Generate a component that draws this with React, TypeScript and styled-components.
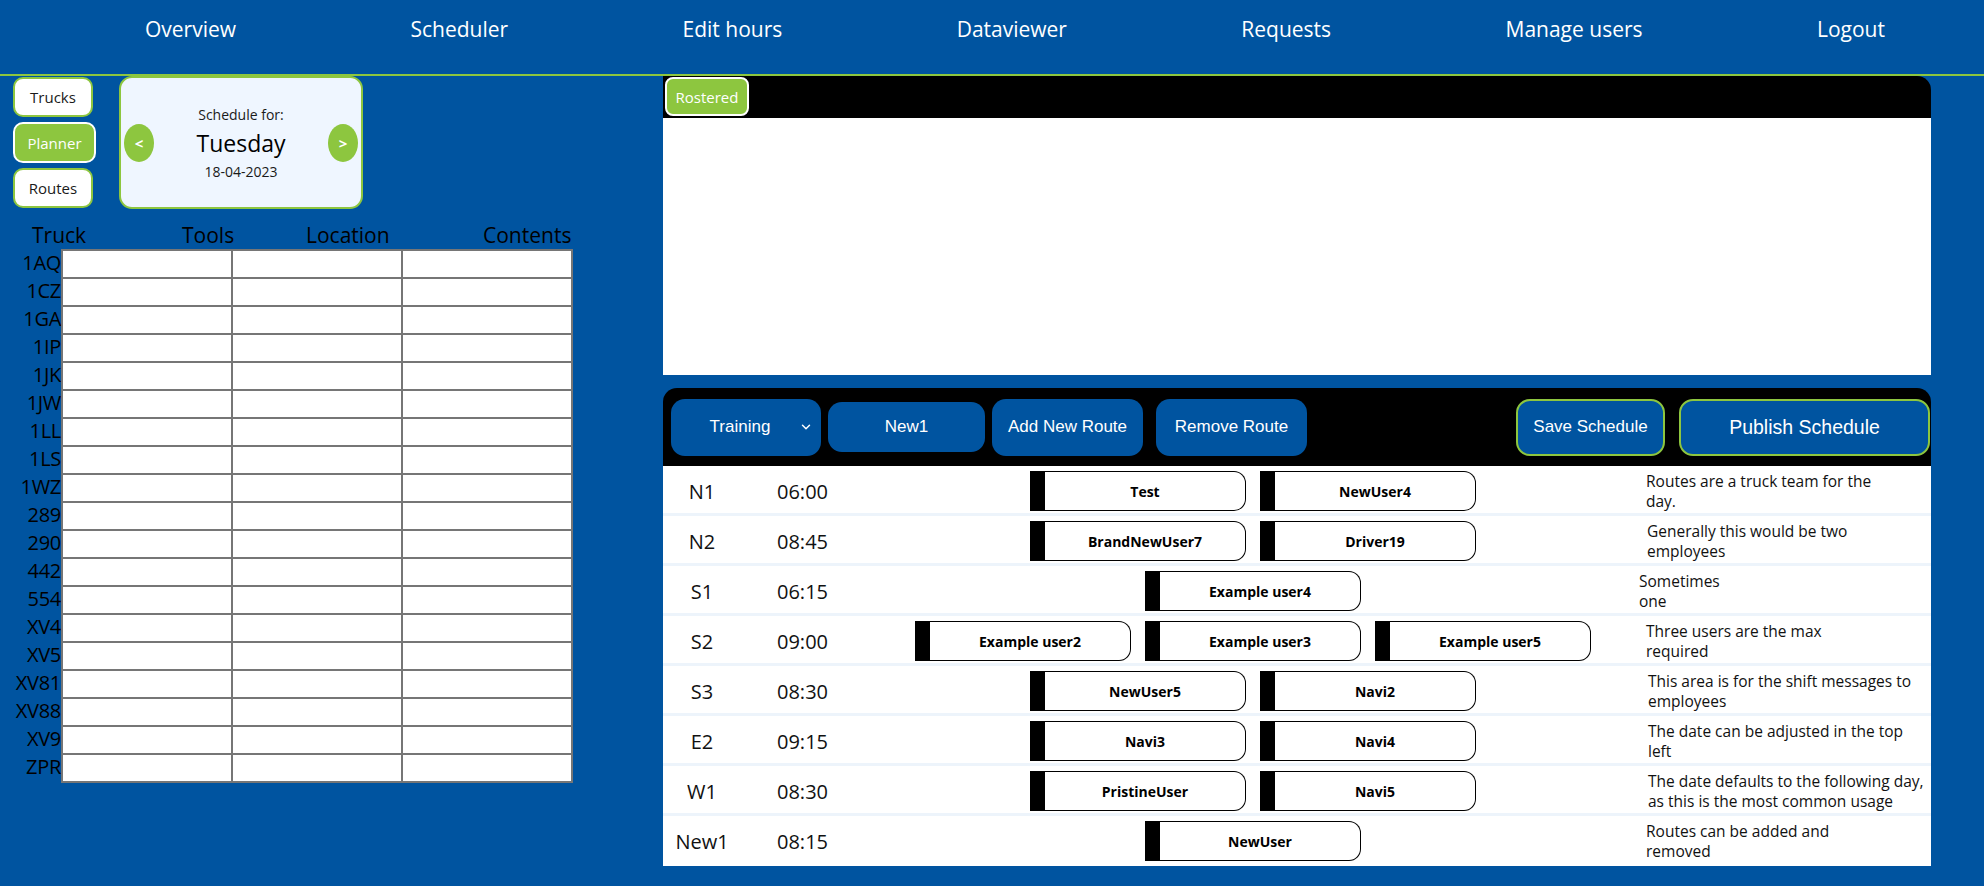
import React from "react";
import styled, { createGlobalStyle } from "styled-components";
import { ChevronDown } from "lucide-react";

const BLUE = "#0054a0";
const GREEN = "#8dc63f";

const GlobalStyle = createGlobalStyle`
  html, body {
    margin: 0;
    padding: 0;
    background: ${BLUE};
    font-family: "Open Sans", "Noto Sans", sans-serif;
    overflow: hidden;
  }
  * { box-sizing: border-box; }
`;

const Page = styled.div`
  width: 1984px;
  height: 886px;
  overflow: hidden;
  background: ${BLUE};
`;

const Nav = styled.nav`
  height: 76px;
  display: flex;
  align-items: center;
  justify-content: space-between;
  padding: 0 99px 16px 145px;
  border-bottom: 2px solid ${GREEN};
`;

const NavLink = styled.a`
  color: #fff;
  font-size: 21px;
  line-height: 28px;
  text-decoration: none;
  cursor: pointer;
`;

const Main = styled.div`
  display: flex;
  align-items: flex-start;
`;

const LeftColumn = styled.section`
  width: 663px;
  display: flex;
  flex-direction: column;
`;

const TopControls = styled.div`
  display: flex;
  align-items: flex-start;
  gap: 23px;
  padding-left: 13px;
`;

const ViewButtons = styled.div`
  width: 83px;
  padding-top: 1px;
  display: flex;
  flex-direction: column;
  gap: 5px;
`;

const ViewButton = styled.button<{ $active?: boolean }>`
  width: ${(p) => (p.$active ? "83px" : "80px")};
  height: ${(p) => (p.$active ? "41px" : "40px")};
  border-radius: 10px;
  border: 2px solid ${(p) => (p.$active ? "#fff" : GREEN)};
  background: ${(p) => (p.$active ? GREEN : "#fff")};
  color: ${(p) => (p.$active ? "#fff" : "#1a1a1a")};
  font-family: "Open Sans", sans-serif;
  font-size: 15px;
  padding: 0;
  cursor: pointer;
`;

const DateCard = styled.div`
  width: 244px;
  height: 133px;
  background: #eff6ff;
  border: 2px solid ${GREEN};
  border-radius: 13px;
  display: flex;
  align-items: center;
  padding: 0 3px;
`;

const ArrowButton = styled.button`
  width: 30px;
  height: 38px;
  border-radius: 50%;
  border: none;
  background: ${GREEN};
  color: #fff;
  font-family: "Open Sans", sans-serif;
  font-weight: 700;
  font-size: 15px;
  padding: 0;
  cursor: pointer;
`;

const DateText = styled.div`
  flex: 1;
  display: flex;
  flex-direction: column;
  align-items: center;
  color: #1a1a1a;
`;

const DateLabel = styled.div`
  font-size: 14px;
  line-height: 19px;
`;

const DayName = styled.div`
  font-size: 23px;
  line-height: 38px;
  color: #000;
`;

const TableHeader = styled.div`
  margin-top: 12px;
  height: 28px;
  display: grid;
  grid-template-columns: 150px 124px 177px 90px;
  padding-left: 32px;
  font-size: 21px;
  line-height: 28px;
  color: #000;
`;

const TruckTable = styled.div`
  display: flex;
  flex-direction: column;
`;

const TruckRow = styled.div`
  display: grid;
  grid-template-columns: 61px 170px 170px 172px;
  height: 28px;
  &:last-child {
    height: 30px;
  }
`;

const TruckLabel = styled.div`
  text-align: right;
  font-size: 20px;
  line-height: 28px;
  color: #000;
  letter-spacing: -0.3px;
`;

const TruckCell = styled.div`
  background: #fff;
  border-left: 2px solid #767676;
  border-top: 2px solid #767676;
  &:last-child {
    border-right: 2px solid #767676;
  }
  ${TruckRow}:last-child & {
    border-bottom: 2px solid #767676;
  }
`;

const RightColumn = styled.section`
  width: 1268px;
  display: flex;
  flex-direction: column;
`;

const RosterPanel = styled.div`
  height: 299px;
  display: flex;
  flex-direction: column;
`;

const RosterHeader = styled.div`
  height: 42px;
  background: #000;
  border-radius: 0 14px 0 0;
  padding: 1px 0 0 2px;
`;

const RosterTab = styled.button`
  width: 84px;
  height: 39px;
  background: ${GREEN};
  border: 2px solid #fff;
  border-radius: 8px;
  color: #fff;
  font-family: "Open Sans", sans-serif;
  font-size: 15px;
  padding: 0;
`;

const RosterBody = styled.div`
  flex: 1;
  background: #fff;
`;

const RoutePanel = styled.div`
  margin-top: 13px;
  display: flex;
  flex-direction: column;
`;

const Toolbar = styled.div`
  height: 78px;
  background: #000;
  border-radius: 14px 14px 0 0;
  display: flex;
  align-items: center;
  padding: 0 1px 0 8px;
  gap: 7px;
`;

const ToolButton = styled.button<{
  $w: number;
  $h?: number;
  $outlined?: boolean;
  $big?: boolean;
  $push?: number;
}>`
  width: ${(p) => p.$w}px;
  height: ${(p) => p.$h ?? 57}px;
  margin-left: ${(p) => p.$push ?? 0}px;
  background: ${BLUE};
  color: #fff;
  border: ${(p) => (p.$outlined ? `2px solid ${GREEN}` : "none")};
  border-radius: 14px;
  font-family: "Liberation Sans", Arial, sans-serif;
  font-size: ${(p) => (p.$big ? "19.5px" : "17px")};
  padding: 0;
  cursor: pointer;
`;

const SelectBox = styled.div`
  width: 150px;
  height: 57px;
  background: ${BLUE};
  color: #fff;
  border-radius: 14px;
  display: flex;
  align-items: center;
  padding: 0 8px 0 10px;
  font-family: "Liberation Sans", Arial, sans-serif;
  font-size: 17px;
`;

const SelectText = styled.span`
  flex: 1;
  text-align: center;
`;

const Spacer = styled.div`
  flex: 1;
`;

const RouteList = styled.div`
  background: #fff;
`;

const RouteRow = styled.div`
  display: grid;
  grid-template-columns: 78px 119px 786px 1fr;
  align-items: center;
  height: 50px;
  padding-top: 3px;
  border-bottom: 3px solid #edf4fb;
  &:last-child {
    border-bottom-color: #fff;
  }
`;

const RouteName = styled.div`
  text-align: center;
  font-size: 20px;
  color: #111;
`;

const RouteTime = styled.div`
  padding-left: 36px;
  font-size: 20px;
  color: #111;
`;

const ChipArea = styled.div`
  display: flex;
  justify-content: center;
  gap: 14px;
`;

const Chip = styled.div`
  width: 216px;
  height: 40px;
  display: flex;
`;

const ChipBar = styled.span`
  width: 15px;
  background: #000;
`;

const ChipName = styled.span`
  flex: 1;
  display: flex;
  align-items: center;
  justify-content: center;
  border: 1.5px solid #000;
  border-left: none;
  border-radius: 0 12px 12px 0;
  font-weight: 700;
  font-size: 14px;
  color: #000;
`;

const Message = styled.div<{ $shift?: number }>`
  margin-left: ${(p) => p.$shift ?? 0}px;
  white-space: pre;
  font-size: 15.5px;
  line-height: 20.5px;
  color: #111;
`;

const navItems = [
  "Overview",
  "Scheduler",
  "Edit hours",
  "Dataviewer",
  "Requests",
  "Manage users",
  "Logout",
];

const trucks = [
  "1AQ", "1CZ", "1GA", "1IP", "1JK", "1JW", "1LL", "1LS", "1WZ", "289",
  "290", "442", "554", "XV4", "XV5", "XV81", "XV88", "XV9", "ZPR",
];

type Route = {
  name: string;
  time: string;
  users: string[];
  message: string;
  shift?: number;
};

const routes: Route[] = [
  { name: "N1", time: "06:00", users: ["Test", "NewUser4"], message: "Routes are a truck team for the\nday." },
  { name: "N2", time: "08:45", users: ["BrandNewUser7", "Driver19"], message: "Generally this would be two\nemployees", shift: 1 },
  { name: "S1", time: "06:15", users: ["Example user4"], message: "Sometimes\none", shift: -7 },
  { name: "S2", time: "09:00", users: ["Example user2", "Example user3", "Example user5"], message: "Three users are the max\nrequired" },
  { name: "S3", time: "08:30", users: ["NewUser5", "Navi2"], message: "This area is for the shift messages to\nemployees", shift: 2 },
  { name: "E2", time: "09:15", users: ["Navi3", "Navi4"], message: "The date can be adjusted in the top\nleft", shift: 2 },
  { name: "W1", time: "08:30", users: ["PristineUser", "Navi5"], message: "The date defaults to the following day,\nas this is the most common usage", shift: 2 },
  { name: "New1", time: "08:15", users: ["NewUser"], message: "Routes can be added and\nremoved" },
];

export default function App() {
  return (
    <Page>
      <GlobalStyle />
      <Nav>
        {navItems.map((n) => (
          <NavLink key={n}>{n}</NavLink>
        ))}
      </Nav>
      <Main>
        <LeftColumn>
          <TopControls>
            <ViewButtons>
              <ViewButton>Trucks</ViewButton>
              <ViewButton $active>Planner</ViewButton>
              <ViewButton>Routes</ViewButton>
            </ViewButtons>
            <DateCard>
              <ArrowButton>&lt;</ArrowButton>
              <DateText>
                <DateLabel>Schedule for:</DateLabel>
                <DayName>Tuesday</DayName>
                <DateLabel>18-04-2023</DateLabel>
              </DateText>
              <ArrowButton>&gt;</ArrowButton>
            </DateCard>
          </TopControls>
          <TableHeader>
            <span>Truck</span>
            <span>Tools</span>
            <span>Location</span>
            <span>Contents</span>
          </TableHeader>
          <TruckTable>
            {trucks.map((t) => (
              <TruckRow key={t}>
                <TruckLabel>{t}</TruckLabel>
                <TruckCell />
                <TruckCell />
                <TruckCell />
              </TruckRow>
            ))}
          </TruckTable>
        </LeftColumn>
        <RightColumn>
          <RosterPanel>
            <RosterHeader>
              <RosterTab>Rostered</RosterTab>
            </RosterHeader>
            <RosterBody />
          </RosterPanel>
          <RoutePanel>
            <Toolbar>
              <SelectBox>
                <SelectText>Training</SelectText>
                <ChevronDown size={14} strokeWidth={2.5} color="#fff" />
              </SelectBox>
              <ToolButton $w={157} $h={50}>New1</ToolButton>
              <ToolButton $w={151}>Add New Route</ToolButton>
              <ToolButton $w={151} $push={6}>Remove Route</ToolButton>
              <Spacer />
              <ToolButton $w={149} $outlined>Save Schedule</ToolButton>
              <ToolButton $w={251} $outlined $big $push={7}>Publish Schedule</ToolButton>
            </Toolbar>
            <RouteList>
              {routes.map((r) => (
                <RouteRow key={r.name}>
                  <RouteName>{r.name}</RouteName>
                  <RouteTime>{r.time}</RouteTime>
                  <ChipArea>
                    {r.users.map((u) => (
                      <Chip key={u}>
                        <ChipBar />
                        <ChipName>{u}</ChipName>
                      </Chip>
                    ))}
                  </ChipArea>
                  <Message $shift={r.shift}>{r.message}</Message>
                </RouteRow>
              ))}
            </RouteList>
          </RoutePanel>
        </RightColumn>
      </Main>
    </Page>
  );
}
